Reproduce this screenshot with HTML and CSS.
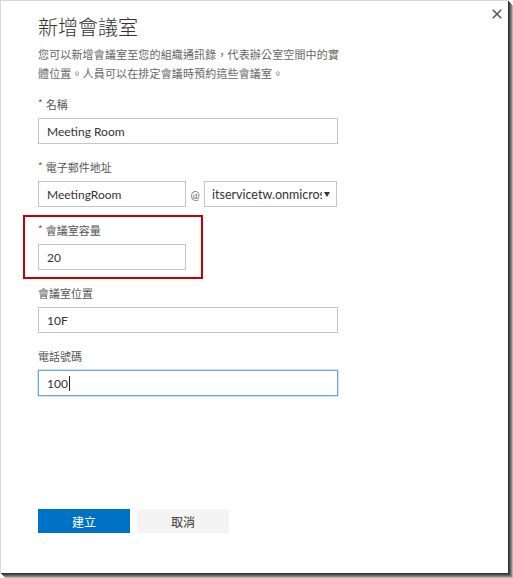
FILE: index.html
```html
<!DOCTYPE html>
<html lang="zh-Hant">
<head>
<meta charset="utf-8">
<title>新增會議室</title>
<link rel="stylesheet" href="styles.css">
</head>
<body>
<div class="dialog">
  <div class="header">
    <h1 class="title">新增會議室</h1>
    <button class="close" aria-label="關閉">
      <svg width="10" height="10" viewBox="0 0 10 10"><path d="M0.8 0.8 L9.2 9.2 M9.2 0.8 L0.8 9.2" stroke="#555" stroke-width="1.6" fill="none"/></svg>
    </button>
  </div>
  <p class="desc">您可以新增會議室至您的組織通訊錄，代表辦公室空間中的實體位置。人員可以在排定會議時預約這些會議室。</p>
  <div class="form">
    <div class="field">
      <div class="label"><span class="req">*</span>名稱</div>
      <input class="input wide" type="text" value="Meeting Room">
    </div>
    <div class="field">
      <div class="label"><span class="req">*</span>電子郵件地址</div>
      <div class="email-row">
        <input class="input narrow" type="text" value="MeetingRoom">
        <span class="at">@</span>
        <div class="select">
          <span class="select-text">itservicetw.onmicrosoft.com</span>
          <svg class="arrow" width="6" height="5" viewBox="0 0 6 5"><path d="M0 0 H6 L3 5 Z" fill="#333"/></svg>
        </div>
      </div>
    </div>
    <div class="field highlighted">
      <div class="label"><span class="req">*</span>會議室容量</div>
      <input class="input narrow" type="text" value="20">
    </div>
    <div class="field">
      <div class="label">會議室位置</div>
      <input class="input wide" type="text" value="10F">
    </div>
    <div class="field">
      <div class="label">電話號碼</div>
      <div class="input wide focused">100<span class="caret"></span></div>
    </div>
  </div>
  <div class="actions">
    <button class="btn primary">建立</button>
    <button class="btn secondary">取消</button>
  </div>
</div>
</body>
</html>
```

FILE: styles.css
```css
html, body {
  margin: 0;
  padding: 0;
  background: #fff;
}
body {
  font-family: "Lato", "Noto Sans CJK TC", sans-serif;
  color: #333;
  width: 513px;
  height: 578px;
  overflow: hidden;
}
.dialog {
  width: 508px;
  height: 573px;
  box-sizing: border-box;
  background: #fff;
  border-left: 1px solid #d6d6d6;
  border-top: 1px solid #d6d6d6;
  box-shadow: 1px 1px 0 #333, 2px 2px 0 #4a4a4a, 3px 3px 0 #666, 4px 4px 0 #888, 5px 5px 0 #b5b5b5;
  padding: 12px 6px 0 37px;
}
.header {
  display: flex;
  justify-content: space-between;
  align-items: flex-start;
}
.title {
  margin: 0;
  font-family: "Noto Sans CJK TC", sans-serif;
  font-weight: 300;
  font-size: 20px;
  line-height: 28px;
  color: #333;
}
.close {
  margin-top: -4px;
  padding: 0;
  border: 0;
  background: none;
  width: 10px;
  height: 10px;
  display: flex;
}
.desc {
  margin: 4px 0 0;
  width: 306px;
  font-family: "Noto Sans CJK TC", sans-serif;
  font-size: 11px;
  letter-spacing: 0.15px;
  line-height: 19px;
  color: #666;
}
.form {
  margin-top: 13px;
  display: flex;
  flex-direction: column;
  gap: 15px;
}
.field {
  display: flex;
  flex-direction: column;
  align-items: flex-start;
}
.highlighted {
  position: relative;
}
.highlighted::after {
  content: "";
  position: absolute;
  top: -7px;
  left: -15px;
  width: 180px;
  height: 64px;
  box-sizing: border-box;
  border: 2px solid #c40000;
}
.label {
  font-family: "Noto Sans CJK TC", sans-serif;
  font-size: 11px;
  line-height: 16px;
  color: #555;
  margin-bottom: 6px;
  display: flex;
  align-items: center;
}
.req {
  color: #c0392b;
  font-size: 10px;
  margin-right: 3px;
  position: relative;
  top: -1px;
}
.input {
  box-sizing: border-box;
  height: 26px;
  margin: 0;
  padding: 0 8px;
  border: 1px solid #c2c6c6;
  border-radius: 0;
  background: #fff;
  font-family: "Lato", "Noto Sans CJK TC", sans-serif;
  font-size: 12px;
  color: #333;
  outline: none;
}
.wide {
  width: 300px;
}
.narrow {
  width: 148px;
}
.focused {
  display: flex;
  align-items: center;
  border-color: #6aa5ea;
  box-shadow: 0 0 0 0.5px #9cc3f0;
}
.caret {
  display: inline-block;
  width: 1px;
  height: 15px;
  background: #222;
  margin-left: 1px;
}
.email-row {
  display: flex;
  align-items: center;
}
.at {
  width: 18px;
  text-align: center;
  font-size: 11px;
  color: #666;
}
.select {
  box-sizing: border-box;
  width: 133px;
  height: 26px;
  border: 1px solid #c2c6c6;
  display: flex;
  align-items: center;
  padding: 0 6px 0 7px;
  font-size: 12px;
  color: #333;
}
.select-text {
  width: 111px;
  overflow: hidden;
  white-space: nowrap;
  font-size: 12.5px;
}
.arrow {
  margin-left: 2px;
}
.actions {
  margin-top: 113px;
  display: flex;
  gap: 7px;
}
.btn {
  width: 92px;
  height: 24px;
  border: 0;
  padding: 0;
  font-family: "Noto Sans CJK TC", sans-serif;
  font-size: 12px;
}
.primary {
  background: #0072c6;
  color: #fff;
}
.secondary {
  background: #f4f4f4;
  color: #333;
}
```
